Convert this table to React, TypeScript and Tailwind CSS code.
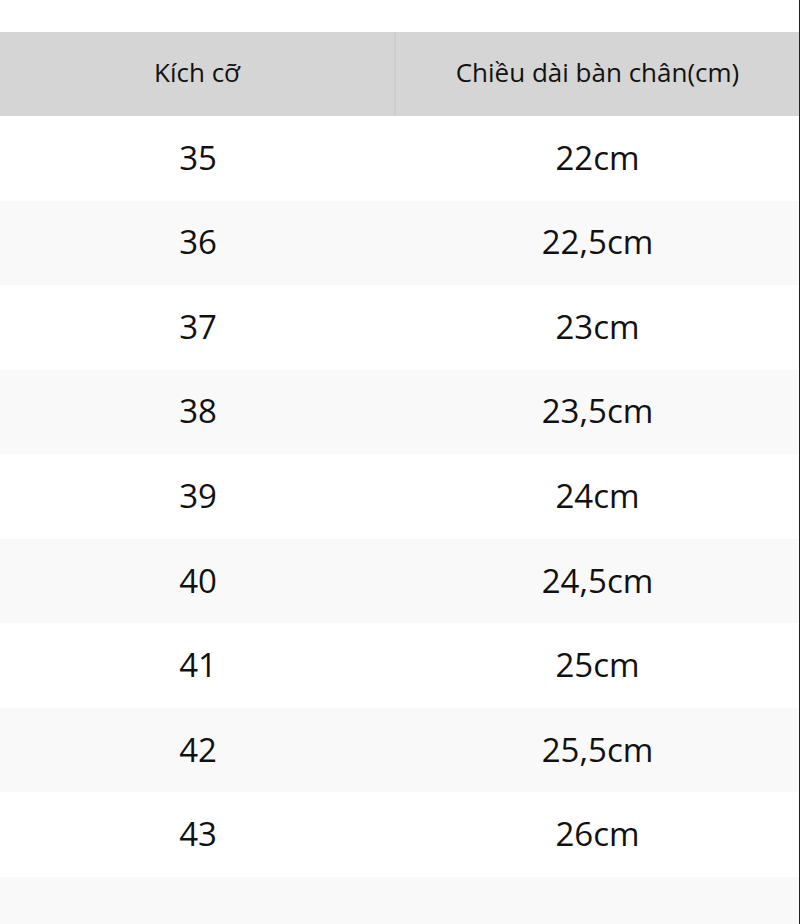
const rows: [string, string][] = [
  ['35', '22cm'],
  ['36', '22,5cm'],
  ['37', '23cm'],
  ['38', '23,5cm'],
  ['39', '24cm'],
  ['40', '24,5cm'],
  ['41', '25cm'],
  ['42', '25,5cm'],
  ['43', '26cm'],
  ['', ''],
];

export default function App() {
  return (
    <div
      className="w-[800px] h-[924px] overflow-hidden bg-white border-r border-[#222] text-[#111]"
      style={{ fontFamily: '"Open Sans", "Noto Sans", sans-serif' }}
    >
      <div className="h-[32px]" />
      <div className="grid grid-cols-[396px_1fr] h-[84px] bg-[#d5d5d5] text-[26px] leading-none">
        <div className="flex items-center justify-center border-r-2 border-[#cdcdcd] pb-[5px]">Kích cỡ</div>
        <div className="flex items-center justify-center pb-[5px]">Chiều dài bàn chân(cm)</div>
      </div>
      {rows.map(([size, len], i) => (
        <div
          key={i}
          className={`grid grid-cols-[396px_1fr] h-[84.55px] text-[33px] leading-none ${i % 2 === 1 ? 'bg-[#f9f9f9]' : 'bg-white'}`}
        >
          <div className="flex items-center justify-center pb-[2px]">{size}</div>
          <div className="flex items-center justify-center pb-[2px]">{len}</div>
        </div>
      ))}
    </div>
  );
}
